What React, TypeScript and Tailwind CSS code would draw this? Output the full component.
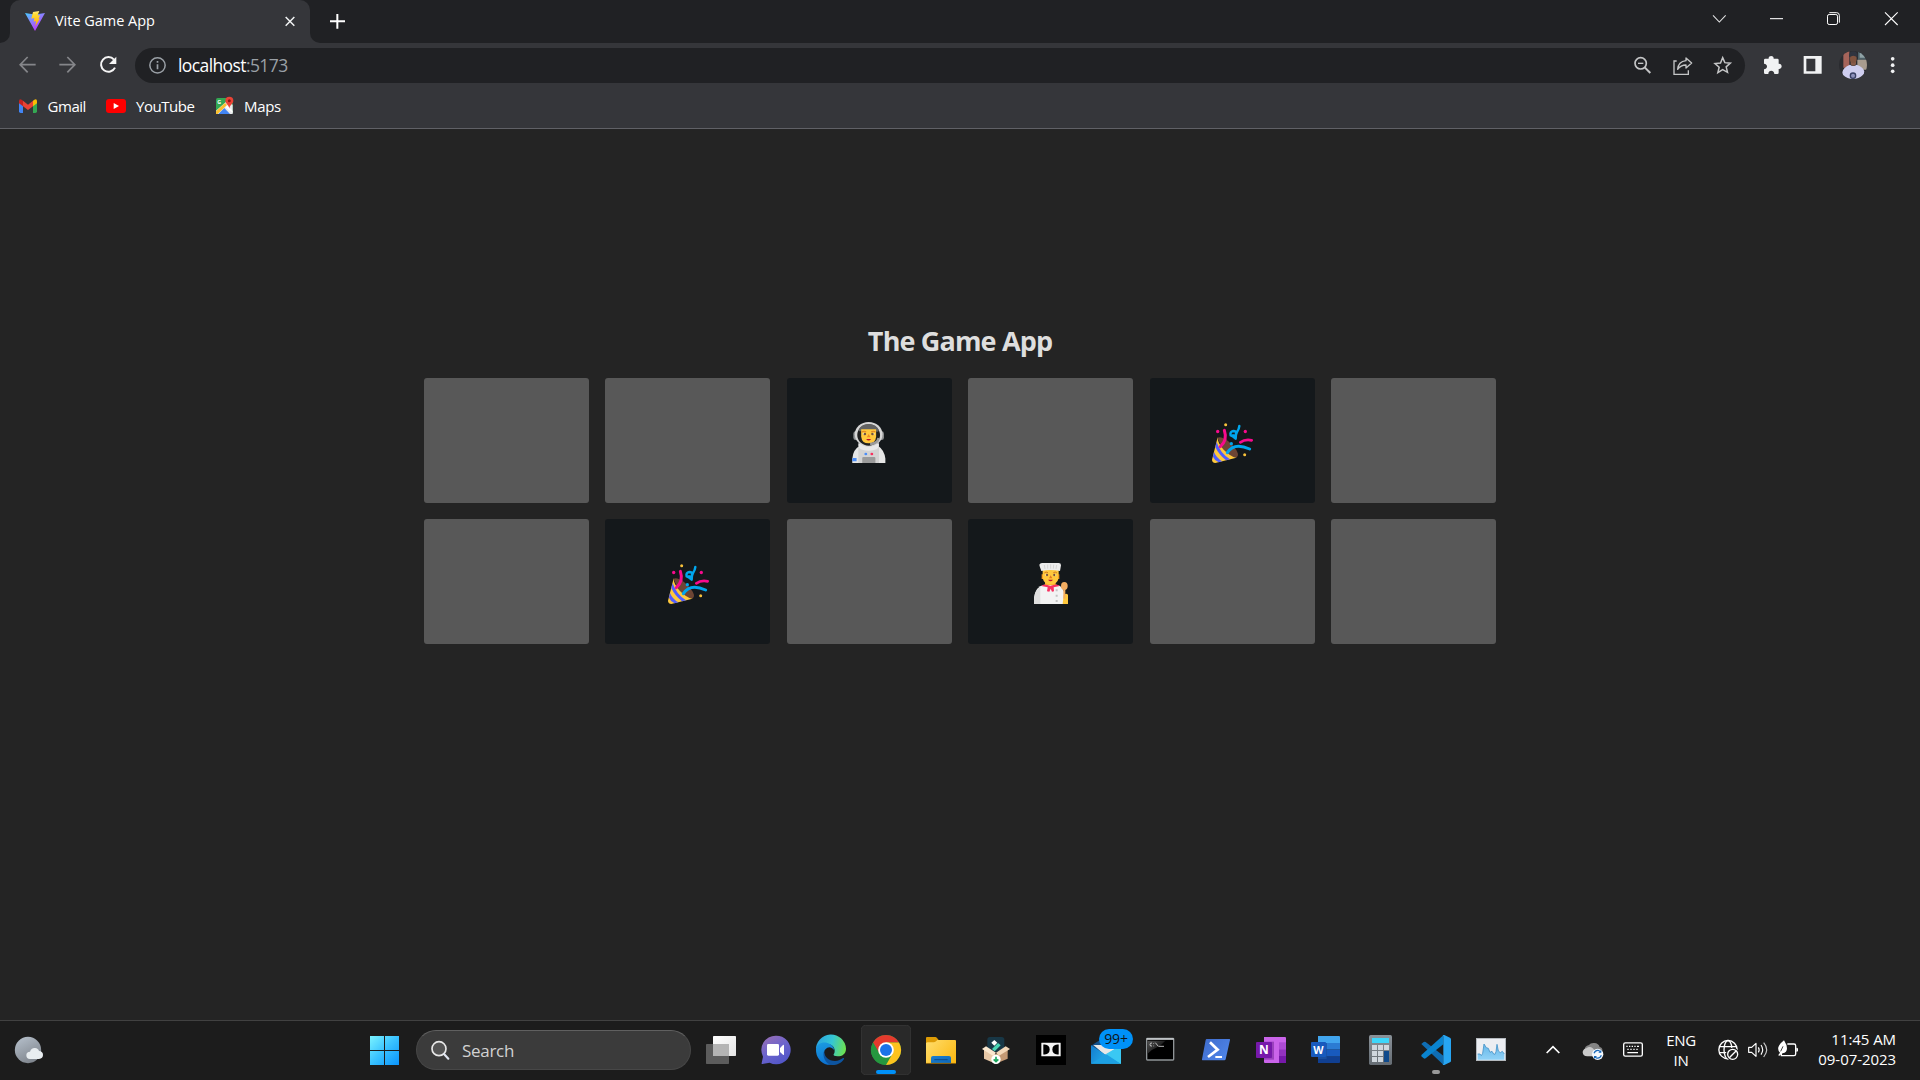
import React from "react";

type IconProps = { box: string; w: number; h: number; className?: string; children: React.ReactNode };

function Icon({ box, w, h, className = "", children }: IconProps) {
  return (
    <svg viewBox={box} width={w} height={h} fill="none" preserveAspectRatio="none" className={`block shrink-0 ${className}`}>
      {children}
    </svg>
  );
}

function App50({ box, children }: { box: string; children: React.ReactNode }) {
  return (
    <Icon box={box} w={50} h={50}>
      {children}
    </Icon>
  );
}

function TabStrip() {
  return (
    <div className="flex h-[43px] bg-[#35363a]">
      <div className="w-[10px] rounded-br-[10px] bg-[#202124]" />
      <div className="w-[300px] bg-[#202124]">
        <div className="flex h-full items-center rounded-t-[10px] bg-[#35363a] pl-[14px]">
          <Icon box="72 27 66 69" w={22} h={23} className="-mt-[2px]">
            <defs>
              <linearGradient id="vite" x1="76" y1="36" x2="110" y2="92" gradientUnits="userSpaceOnUse">
                <stop stopColor="#41D1FF" />
                <stop offset="0.55" stopColor="#8f7bff" />
                <stop offset="1" stopColor="#BD34FE" />
              </linearGradient>
              <linearGradient id="bolt" x1="105" y1="34" x2="108" y2="78" gradientUnits="userSpaceOnUse">
                <stop stopColor="#FFEA83" />
                <stop offset="0.2" stopColor="#FFDD35" />
                <stop offset="1" stopColor="#FFA800" />
              </linearGradient>
            </defs>
            <path d="M75 39l24 4h12l24-4-30 54z" fill="url(#vite)" />
            <path d="M99 36l19-3-5 13 7 0-4 10 3 1-13 22 2-16-7 2 2-11-9 2z" fill="url(#bolt)" />
          </Icon>
          <span className="-mt-[2px] ml-[9px] w-[229px] text-[14.5px] leading-5 tracking-[-0.02px] whitespace-nowrap text-white">Vite Game App</span>
          <Icon box="852 45 36 36" w={12} h={12} className="-mt-[1px]">
            <path d="M857 51l26 26M883 51l-26 26" stroke="#f1f3f4" strokeWidth="4.5" />
          </Icon>
        </div>
      </div>
      <div className="flex flex-1 items-center rounded-bl-[10px] bg-[#202124]">
        <Icon box="987 39 51 51" w={17} h={17} className="ml-[19px]">
          <path d="M1012 42v44M990 64h45" stroke="#fff" strokeWidth="6" />
        </Icon>
        <div className="flex-1" />
        <Icon box="330 30 60 48" w={20} h={16} className="mr-[40px] -mt-[7px]">
          <path d="M339 46l19 20 19-20" stroke="#e2e3e4" strokeWidth="3.2" />
        </Icon>
        <Icon box="510 30 42 48" w={14} h={16} className="mr-[41px] -mt-[7px]">
          <path d="M510 56h39" stroke="#fff" strokeWidth="3.2" />
        </Icon>
        <Icon box="675 30 51 48" w={17} h={16} className="mr-[42px] -mt-[7px]">
          <rect x="682.5" y="43.500" width="30" height="30" rx="5" stroke="#fff" strokeWidth="3" />
          <path d="M688 38h22q8 0 8 8v22" stroke="#fff" strokeWidth="3" />
        </Icon>
        <Icon box="852 30 45 48" w={15} h={16} className="mr-[21px] -mt-[7px]">
          <path d="M855 37l38 38M893 37l-38 38" stroke="#fff" strokeWidth="3.2" />
        </Icon>
      </div>
    </div>
  );
}

function Toolbar() {
  return (
    <div className="flex h-[45px] items-center">
      <Icon box="54 165 66 60" w={22} h={20} className="-mt-[1px] ml-[18px]">
        <path d="M107 194H61M83 171l-22.500 23L83 217" stroke="#85868a" strokeWidth="5" />
      </Icon>
      <Icon box="174 165 66 60" w={22} h={20} className="-mt-[1px] ml-[18px]">
        <path d="M178 194h46M202 171l22.500 23L202 217" stroke="#85868a" strokeWidth="5" />
      </Icon>
      <Icon box="294 165 66 60" w={22} h={20} className="-mt-[1px] ml-[18px]">
        <path d="M342 179A22 22 0 1 0 345 203" stroke="#f5f5f5" strokeWidth="6" />
        <path d="M349 170v22h-22z" fill="#f5f5f5" />
      </Icon>
      <div className="ml-[15px] flex h-[35px] w-[1610px] items-center rounded-full bg-[#202124]">
        <Icon box="444 168 57 57" w={19} h={19} className="ml-[13px]">
          <circle cx="472.500" cy="196" r="23" stroke="#9aa0a6" strokeWidth="4.500" />
          <path d="M472.500 193v15M472.500 183v5" stroke="#9aa0a6" strokeWidth="5" />
        </Icon>
        <span className="-mt-[1px] ml-[11px] w-[1451px] text-[17.5px] leading-6 tracking-[-0.6px] whitespace-nowrap text-white">
          localhost<span className="text-[#9aa0a6]">:5173</span>
        </span>
        <Icon box="96 165 66 60" w={22} h={20} className="-mt-[1px] ml-[3px]">
          <circle cx="122" cy="190" r="17" stroke="#c4c5c6" strokeWidth="5" />
          <path d="M114 190h16" stroke="#c4c5c6" strokeWidth="4" />
          <path d="M134 202l17 17" stroke="#c4c5c6" strokeWidth="6" />
        </Icon>
        <Icon box="216 165 66 66" w={22} h={22} className="mt-[1px] ml-[18px]">
          <path d="M230 183h-8v40h43v-12" stroke="#c4c5c6" strokeWidth="4" />
          <path d="M258 174l17 15-17 15v-9c-11 0-18 3-25 13 1-14 9-24 25-26z" stroke="#c4c5c6" strokeWidth="4" strokeLinejoin="round" />
        </Icon>
        <Icon box="336 165 66 60" w={22} h={20} className="-mt-[1px] ml-[18px]">
          <path d="M368 173l6.500 15 16.500 1.500-12.500 11 4 16.500L368 209l-14.500 9 4-16.500-12.500-11 16.500-1.500z" stroke="#c4c5c6" strokeWidth="4.500" />
        </Icon>
      </div>
      <Icon box="486 165 66 60" w={22} h={20} className="-mt-[1px] ml-[17px]">
        <path d="M492 180q0-4 4-4h10c-2-10 16-11 15 0h11q4 0 4 4v11c12-1 12 17 0 16v11q0 4-4 4h-9c-1-13-18-13-18 0h-9q-4 0-4-4v-10c12-2 12-16 0-17z" fill="#f1f2f3" />
      </Icon>
      <Icon box="606 165 66 60" w={22} h={20} className="-mt-[1px] ml-[18px]">
        <path fillRule="evenodd" d="M611 168h54v53h-54zM619 176v38h27v-38z" fill="#f1f2f3" />
      </Icon>
      <Icon box="717 152 84 84" w={28} h={28} className="-mt-[1px] ml-[15px] rounded-full">
        <path d="M717 152h84v84h-84z" fill="#2b2c30" />
        <path d="M730 152h18v50h-18z" fill="#a5645a" />
        <path d="M774 152h27v26h-27z" fill="#4e6168" />
        <path d="M779 158h16v14h-16z" fill="#8fa2a6" />
        <path d="M772 178h29v30h-29z" fill="#a99c8f" />
        <path d="M727 216q2-15 23-23 10 8 20 0 19 6 23 20l-4 23h-58z" fill="#cfceef" />
        <path d="M752 180h16v12q-8 9-16 0z" fill="#875b49" />
        <ellipse cx="760" cy="175" rx="10" ry="13" fill="#80533f" />
        <path d="M747 170q-1-17 13-17 13 0 13 17l-13-4z" fill="#30343f" />
        <circle cx="759" cy="226" r="8" fill="#8d91bb" stroke="#394065" strokeWidth="4" />
      </Icon>
      <Icon box="864 165 30 60" w={10} h={20} className="-mt-[1px] ml-[21px]">
        <circle cx="878" cy="176.500" r="5.500" fill="#f1f2f3" />
        <circle cx="878" cy="195.500" r="5.500" fill="#f1f2f3" />
        <circle cx="878" cy="214" r="5.500" fill="#f1f2f3" />
      </Icon>
    </div>
  );
}

function Bookmarks() {
  return (
    <div className="flex h-[41px] items-center border-b border-[#606166] pb-[3px] text-[15px] leading-5 tracking-[-0.45px] whitespace-nowrap text-white">
      <Icon box="54 291 60 54" w={20} h={18} className="ml-[18px] -mt-[1px]">
        <path d="M57 303v31q0 5 5 5h7v-27z" fill="#4285f4" />
        <path d="M111 303v31q0 5-5 5h-7v-27z" fill="#34a853" />
        <path d="M99 302l4-3q8-4 8 5v6l-12 9z" fill="#fbbc04" />
        <path d="M57 310v-6q0-9 8-5l4 3v17z" fill="#c5221f" />
        <path d="M69 302l15 12 15-12v17l-15 11-15-11z" fill="#ea4335" />
      </Icon>
      <span className="-mt-[2px] ml-[9.500px] w-[57.500px]">Gmail</span>
      <Icon box="315 291 66 54" w={22} h={18} className="-mt-[1px]">
        <rect x="318" y="297" width="60" height="42" rx="9" fill="#f00" />
        <path d="M341 309v18l16-9z" fill="#fff" />
      </Icon>
      <span className="-mt-[2px] ml-[9px] w-[78px]">YouTube</span>
      <Icon box="642 285 66 60" w={22} h={20} className="-mt-[3px]">
        <rect x="648" y="294" width="50" height="48" rx="5" fill="#34a853" />
        <path d="M648 332l32-28 18 10v28h-50z" fill="#e9eaed" />
        <path d="M655 342l18-18 17 18z" fill="#4285f4" />
        <path d="M648 334l27-25 6 6-28 27h-5z" fill="#fbc02d" />
        <path d="M676 322l6-6 16 17v6z" fill="#fff" />
        <text x="652" y="313" fontSize="16" fontWeight="700" fill="#fff" fontFamily="Open Sans">G</text>
        <path d="M688 326c-1-13-12-14-12-24a12 12 0 0 1 24 0c0 10-11 11-12 24z" fill="#ea4335" />
        <circle cx="688" cy="302" r="4.500" fill="#8c1a14" />
      </Icon>
      <span className="-mt-[2px] ml-[8px] tracking-[-0.35px]">Maps</span>
    </div>
  );
}

function Astronaut() {
  return (
    <Icon box="1200 306 118 126" w={42} h={42}>
      <path d="M1212 429v-13q2-27 20-38h53q17 12 20 38v13z" fill="#e6e6e6" />
      <path d="M1229 380h58v49h-58z" fill="#d3d3d3" />
      <path d="M1229 376q0 16 29 16t29-16v-6h-58z" fill="#e9e9e9" />
      <rect x="1215" y="334" width="86" height="26" rx="7" fill="#8f9193" />
      <ellipse cx="1258" cy="343" rx="39" ry="37" fill="#d6d6d6" />
      <ellipse cx="1258" cy="345" rx="32" ry="32" fill="#212121" />
      <path d="M1229 332q6-20 29-20t29 20q-6 7-9 0h-40q-4 4-9 0z" fill="#636363" />
      <path d="M1237 328h42v22q-2 20-21 20t-21-20z" fill="#ffc83d" />
      <path d="M1239 336q6-5 12 0M1265 336q6-5 12 0" stroke="#e38724" strokeWidth="3" />
      <ellipse cx="1247" cy="342" rx="4" ry="4" fill="#70543f" />
      <ellipse cx="1269" cy="342" rx="4" ry="4" fill="#70543f" />
      <path d="M1243 339v5M1273 339v5" stroke="#fff" strokeWidth="2" />
      <path d="M1258 342l-5 10h10z" fill="#f08a24" />
      <path d="M1251 357h14q-7 9-14 0z" fill="#b80b2e" />
      <path d="M1286 354q-2 17-24 18" stroke="#9a9a9a" strokeWidth="7" />
      <circle cx="1250" cy="402" r="4" fill="#4a8df8" />
      <circle cx="1267" cy="402" r="4" fill="#f8315f" />
      <path d="M1240 414q0-3 3-3h31q3 0 3 3v15h-37z" fill="#9b9b9b" />
      <path d="M1213 414h11v10h-12z" fill="#4a8df8" />
    </Icon>
  );
}

function Party() {
  return (
    <Icon box="213 156 126 126" w={42} h={42}>
      <path d="M232 203q12-5 32 10 24 19 30 39 1 8-5 11l-32-8z" fill="#6d4534" />
      <path d="M233 202l-17 67q0 9 10 10l63-16q-16-2-38-24-19-21-18-37z" fill="#ffc83d" />
      <path d="M230 216l-4 15q10 22 32 40l12-3q-30-19-40-52zM222 246l-3 14q5 12 17 17l11-3q-17-9-25-28z" fill="#4f5dff" />
      <path d="M253 181q10 30-12 49" stroke="#f70a8d" strokeWidth="9" strokeLinecap="round" />
      <path d="M262 248q20-32 67-11" stroke="#00a6ed" strokeWidth="9" strokeLinecap="round" />
      <path d="M301 217q14-10 34-6" stroke="#f70a8d" strokeWidth="8" strokeLinecap="round" />
      <path d="M298 168q-1 10-7 18-5 9-4 20-9-8-15-10-3-11 8-13 10 0 8 10-3 7-9 3" stroke="#00a6ed" strokeWidth="7.500" strokeLinecap="round" strokeLinejoin="round" />
      <circle cx="233" cy="184.500" r="5" fill="#f70a8d" />
      <circle cx="316" cy="184.500" r="5" fill="#f70a8d" />
      <circle cx="257" cy="164" r="4.500" fill="#f9c23c" />
      <circle cx="314" cy="254" r="4.500" fill="#f9c23c" />
      <circle cx="274" cy="221" r="5" fill="#00a6ed" />
    </Icon>
  );
}

function Chef() {
  return (
    <Icon box="1290 159 126 126" w={42} h={42}>
      <path d="M1302 282v-18q4-35 30-40h38q22 4 24 32v26z" fill="#f3f3f3" />
      <path d="M1302 282v-18q3-25 19-33v51z" fill="#dedede" />
      <path d="M1335 208h32v18h-32z" fill="#f9b52c" />
      <path d="M1328 176h48v28q-4 19-24 19t-24-19z" fill="#ffc83d" />
      <path d="M1325 193h4v14h-4zM1374 193h4v14h-4z" fill="#f59f23" />
      <path d="M1318 164q2-5 8-5h50q7 0 7 7l-3 17q-28-6-56 0l-5-14z" fill="#ececec" />
      <path d="M1333 165l2 12M1343 164v12M1352 163v13M1361 164l-1 12M1370 165l-2 12" stroke="#cfcfcf" strokeWidth="2.500" />
      <path d="M1333 189q5-5 11-1M1360 188q6-4 11 1" stroke="#d67d20" strokeWidth="3" />
      <circle cx="1341" cy="195" r="3.500" fill="#76503e" />
      <circle cx="1363" cy="195" r="3.500" fill="#76503e" />
      <path d="M1337 193v4M1367 193v4" stroke="#fff" strokeWidth="2" />
      <path d="M1352 196l-5 9h10z" fill="#e87920" />
      <path d="M1344 209h15q-7 9-15 0z" fill="#bd1733" />
      <path d="M1324 228q8-9 27 0 20-9 28 0l-18 4 1 12-6 1-4-9-4 9-7-1 2-12z" fill="#f8315f" />
      <path d="M1388 282l3-26q6-8 13-2v28z" fill="#ffc83d" />
      <path d="M1390 236h6v30h-6z" fill="#f3ad61" />
      <ellipse cx="1393" cy="228" rx="10" ry="12" fill="#f3ad61" />
      <path d="M1370 238v6M1370 254v6M1370 270v6" stroke="#c3c3c3" strokeWidth="6" />
    </Icon>
  );
}

const cards: (null | (() => React.ReactElement))[] = [null, null, Astronaut, null, Party, null, null, Party, null, Chef, null, null];

function Game() {
  return (
    <main className="flex flex-1 flex-col items-center bg-[#242424] pt-[194px]">
      <h1 className="h-[55px] text-[27px] leading-[36px] font-bold tracking-[-0.85px] whitespace-nowrap text-[#dedede]">The Game App</h1>
      <div className="grid w-[1072px] grid-cols-6 gap-x-[16.5px] gap-y-4">
        {cards.map((Face, i) =>
          Face ? (
            <div key={i} className="flex h-[125px] justify-center rounded-[3px] bg-[#14181b] pt-[44px]">
              <Face />
            </div>
          ) : (
            <div key={i} className="h-[125px] rounded-[3px] bg-[#585858]" />
          ),
        )}
      </div>
    </main>
  );
}

function Pinned() {
  return (
    <div className="ml-[5px] flex gap-[5px]">
      <App50 box="888 30 150 150">
        <defs>
          <linearGradient id="tv" x1="0" y1="0" x2="1" y2="1">
            <stop stopColor="#fff" />
            <stop offset="1" stopColor="#e4e4e4" />
          </linearGradient>
        </defs>
        <rect x="939" y="63" width="69" height="60" rx="2" fill="url(#tv)" />
        <rect x="918" y="87" width="69" height="60" rx="2" fill="#5c5c5c" />
        <path d="M939 87h48v36h-48z" fill="#b4b4b4" />
      </App50>
      <App50 box="33 30 150 150">
        <defs>
          <linearGradient id="chat" x1="70" y1="65" x2="120" y2="148" gradientUnits="userSpaceOnUse">
            <stop stopColor="#9a6fb4" />
            <stop offset="0.5" stopColor="#6d64cc" />
            <stop offset="1" stopColor="#5256c8" />
          </linearGradient>
        </defs>
        <path d="M107 62a43 43 0 1 1-18 81l-22 4q-3 0-2-3l4-19a43 43 0 0 1 38-63z" fill="url(#chat)" />
        <rect x="81" y="87" width="36" height="35" rx="4" fill="#fff" />
        <path d="M120 99l9-9q3-2 3 2v26q0 4-3 1l-9-8z" fill="#fff" />
      </App50>
      <App50 box="198 30 150 150">
        <defs>
          <linearGradient id="edgeTop" x1="230" y1="80" x2="318" y2="100" gradientUnits="userSpaceOnUse">
            <stop stopColor="#2ba5e0" />
            <stop offset="0.5" stopColor="#35c6d4" />
            <stop offset="1" stopColor="#6fe24b" />
          </linearGradient>
          <linearGradient id="edgeMid" x1="240" y1="80" x2="260" y2="150" gradientUnits="userSpaceOnUse">
            <stop stopColor="#1b9de2" />
            <stop offset="1" stopColor="#0c6fd0" />
          </linearGradient>
        </defs>
        <path d="M228 106a45 45 0 0 1 90-5c0 16-12 23-25 23-9 0-14-3-12-6 6-9 3-24-9-29-20-8-43 4-44 17z" fill="url(#edgeTop)" />
        <path d="M228 104c0-18 20-24 34-20 13 4 21 13 20 21-12-18-31-4-30 10 1 20 22 31 40 27-10 7-20 8-30 7a45 45 0 0 1-34-45z" fill="url(#edgeMid)" />
        <path d="M253 106c-2 20 13 32 32 32 10 0 18-5 24-9 3-1 4 1 3 3-8 13-23 19-37 18-18-2-30-27-22-44z" fill="#0d549f" />
      </App50>
      <App50 box="363 30 150 150">
        <rect x="364" y="31" width="148" height="148" rx="13" fill="#292929" stroke="#353535" strokeWidth="3" />
        <circle cx="438" cy="105" r="45" fill="#25973f" />
        <path d="M399 82.500A45 45 0 0 1 477 82.500H438L418.500 94z" fill="#e53a2d" />
        <path d="M399 82.500L418.500 116.250L438 105V82.500z" fill="#e53a2d" />
        <path d="M399 82.500L418.500 116.250L438 127.500V150A45 45 0 0 1 399 82.500z" fill="#25973f" />
        <path d="M438 150A45 45 0 0 0 477 82.500H438V105L457.500 116.250z" fill="#fcc31e" />
        <circle cx="438" cy="105" r="23.500" fill="#fff" />
        <circle cx="438" cy="105" r="18" fill="#1a73e8" />
        <rect x="408" y="165" width="60" height="12" rx="6" fill="#0091f8" />
      </App50>
      <App50 box="528 30 150 150">
        <defs>
          <linearGradient id="folder" x1="560" y1="80" x2="640" y2="145" gradientUnits="userSpaceOnUse">
            <stop stopColor="#ffdc69" />
            <stop offset="1" stopColor="#fbb914" />
          </linearGradient>
          <linearGradient id="drawer" x1="0" y1="0" x2="1" y2="1">
            <stop stopColor="#1a7fd0" />
            <stop offset="1" stopColor="#0d66b8" />
          </linearGradient>
        </defs>
        <path d="M558 69q0-3 3-3h25q3 0 5 3l5 6v20h-38z" fill="#dd9b05" />
        <path d="M558 84q2-2 5-2h18q4 0 7-3l4-4h53q3 0 3 3v66h-90z" fill="url(#folder)" />
        <path d="M573 144v-15q0-6 6-6h48q6 0 6 6v15z" fill="url(#drawer)" />
        <path d="M583 134h40" stroke="#0a4a8c" strokeWidth="3" />
        <path d="M558 145h90" stroke="#d89204" strokeWidth="2" />
      </App50>
      <App50 box="693 30 150 150">
        <rect x="742" y="66" width="51" height="44" rx="8" fill="#183746" />
        <path d="M763 75l9 8-9 9-9-9z" fill="#fff" />
        <path d="M756 102l18-18 8 7-18 18z" fill="#49d6b5" />
        <path d="M732 103l35 14v29l-35-15z" fill="#e8c9a7" />
        <path d="M803 103l-36 14v29l36-15z" fill="#c49a75" />
        <path d="M738 94l30 19-9 9-33-20z" fill="#fae7ce" />
        <path d="M797 94l-29 19 9 9 33-20z" fill="#f3d8b9" />
        <circle cx="768" cy="133" r="14" fill="#fff" />
        <path d="M768 125v14M761 133l7 7 7-7" stroke="#1ba75d" strokeWidth="5" />
      </App50>
      <App50 box="-12 30 150 150">
        <path d="M18 60h90v90H18z" fill="#000" />
        <rect x="34" y="83" width="58" height="41" rx="1" fill="#f3f3f3" />
        <path d="M40 88.500h4q15 2 15 15t-15 15h-4z" fill="#000" />
        <path d="M86 88.500h-4q-15 2-15 15t15 15h4z" fill="#000" />
      </App50>
      <div className="relative">
        <App50 box="153 30 150 150">
          <defs>
            <linearGradient id="mail" x1="183" y1="100" x2="273" y2="146" gradientUnits="userSpaceOnUse">
              <stop stopColor="#1480d0" />
              <stop offset="0.5" stopColor="#22a5e6" />
              <stop offset="1" stopColor="#3ccff5" />
            </linearGradient>
          </defs>
          <path d="M183 92l28-18h34l28 18v30h-90z" fill="#145089" />
          <path d="M190 90h76v24l-38 8z" fill="#e7e7e7" />
          <path d="M183 91v55h90V91l-45 29z" fill="url(#mail)" />
          <path d="M183 146l45-29 45 29z" fill="#1da0e3" />
          <path d="M273 91v55l-45-29z" fill="#3ac8f3" />
        </App50>
        <span className="absolute top-[4px] left-[18px] flex h-5 w-[34px] items-center justify-center rounded-full bg-[#0091f8] text-[14px] leading-5 tracking-[-0.1px] text-[#101418]">99+</span>
      </div>
      <App50 box="318 30 150 150">
        <defs>
          <linearGradient id="term" x1="352" y1="76" x2="380" y2="105" gradientUnits="userSpaceOnUse">
            <stop stopColor="#555" />
            <stop offset="0.900" stopColor="#222" />
            <stop offset="1" stopColor="#000" />
          </linearGradient>
        </defs>
        <rect x="350" y="70" width="81" height="65" rx="2" fill="#000" stroke="#8f9497" strokeWidth="4" />
        <path d="M352 77h77v8q-48 3-77 32z" fill="url(#term)" />
        <path d="M350 72h81" stroke="#c9cdd0" strokeWidth="5" />
        <path d="M366 84q-6-1-6 5t6 4M371 85v2M371 92v2M376 83l9 11M386 94h16" stroke="#d8d8d8" strokeWidth="2.500" />
      </App50>
      <App50 box="483 30 150 150">
        <defs>
          <linearGradient id="ps" x1="520" y1="72" x2="590" y2="136" gradientUnits="userSpaceOnUse">
            <stop stopColor="#3f6ccc" />
            <stop offset="1" stopColor="#4f86ea" />
          </linearGradient>
        </defs>
        <path d="M530 72h68q3 0 2 3l-13 58q-1 3-4 3h-65q-3 0-2-3l11-58q1-3 3-3z" fill="url(#ps)" />
        <path d="M540 82l23 22-29 22" stroke="#fff" strokeWidth="8" />
        <path d="M556 126h20" stroke="#fff" strokeWidth="6" />
      </App50>
      <App50 box="648 30 150 150">
        <path d="M702 66h63q3 0 3 3v75h-63q-3 0-3-3z" fill="#ca64ea" />
        <path d="M747 82h21v21h-21z" fill="#ae4bd5" />
        <path d="M747 103h21v20h-21z" fill="#9332bf" />
        <path d="M747 123h21v21h-21z" fill="#7719aa" />
        <rect x="702" y="80" width="30" height="54" fill="#9a42bd" />
        <rect x="678" y="81" width="48" height="48" rx="3" fill="#7719aa" />
        <text x="702" y="118" textAnchor="middle" fontSize="36" fontWeight="700" fill="#fff" fontFamily="Open Sans">N</text>
      </App50>
      <App50 box="63 30 150 150">
        <path d="M114 63h63q3 0 3 3v18h-66z" fill="#41a5ee" />
        <path d="M114 84h66v20h-66z" fill="#2b7cd3" />
        <path d="M114 104h66v21h-66z" fill="#185abd" />
        <path d="M114 125h66v16q0 3-3 3h-63z" fill="#103f91" />
        <path d="M114 84h26v48h-26z" fill="#1a4fa0" />
        <rect x="93" y="81" width="45" height="45" rx="3" fill="#185abd" />
        <text x="115.500" y="116" textAnchor="middle" fontSize="32" fontWeight="700" fill="#fff" fontFamily="Open Sans">W</text>
      </App50>
      <App50 box="228 30 150 150">
        <defs>
          <linearGradient id="calc" x1="0" y1="0" x2="0" y2="1">
            <stop stopColor="#8a9299" />
            <stop offset="1" stopColor="#656c73" />
          </linearGradient>
        </defs>
        <rect x="267" y="60" width="69" height="90" rx="5" fill="url(#calc)" />
        <path d="M276 69h51v15h-51z" fill="#3dd6fa" />
        <path d="M276 90h15v15h-15zM294 90h15v15h-15zM312 90h15v15h-15zM276 108h15v15h-15zM294 108h15v15h-15zM276 126h15v15h-15zM294 126h15v15h-15z" fill="#d0d7de" />
        <path d="M312 108h15v33h-15z" fill="#0f4a8c" />
      </App50>
      <App50 box="393 30 150 150">
        <path d="M424 87l7-6q3-2 6 0l53 41v27z" fill="#0f6db3" />
        <path d="M424 124l7 6q3 2 6 0l53-42V61l-65 58q-2 3-1 5z" fill="#0a84cf" />
        <path d="M488 61q2-2 5-1l17 8q3 2 3 5v64q0 3-3 5l-17 8q-3 1-5-1l2-3V64z" fill="#27a5f2" />
        <rect x="456" y="165" width="24" height="12" rx="6" fill="#989898" />
      </App50>
      <App50 box="558 30 150 150">
        <defs>
          <linearGradient id="perf" x1="0" y1="0" x2="0" y2="1">
            <stop stopColor="#65b6e8" />
            <stop offset="1" stopColor="#90d2f7" />
          </linearGradient>
        </defs>
        <rect x="589.500" y="70.500" width="87" height="66" fill="#eceef2" stroke="#b4b9be" strokeWidth="3" />
        <path d="M593 134v-17h7l4 5 4-7 4-28 7 11 6 2 5 12 6-3 5 8 4 1 3-8 3-22 4 20 6 5 6-4 6 8v17z" fill="url(#perf)" />
        <path d="M593 117h7l4 5 4-7 4-28 7 11 6 2 5 12 6-3 5 8 4 1 3-8 3-22 4 20 6 5 6-4 6 8" stroke="#4693c8" strokeWidth="2.500" />
      </App50>
    </div>
  );
}

function Tray() {
  return (
    <>
      <Icon box="30 60 80 90" w={26.667} h={30} className="ml-[24px]">
        <path d="M50 114l19-19 19 19" stroke="#fff" strokeWidth="5" />
      </Icon>
      <Icon box="150 60 90 90" w={30} h={30} className="ml-[13.333px]">
        <path d="M165 104q-2-11 12-14 4-7 16-6 13 1 16 12 10 2 8 13l-30 14z" fill="#848484" />
        <path d="M173 124c-18 1-20-21-4-24 10-8 20-2 24 6l8 18z" fill="#c9c9c9" />
        <circle cx="203" cy="118" r="17" fill="#f4f9fe" />
        <path d="M192 115q5-11 15-8l5 4M214 121q-5 11-15 8l-5-4" stroke="#1767b8" strokeWidth="3.500" />
        <path d="M214 104v9h-9zM192 132v-9h9z" fill="#1767b8" />
      </Icon>
      <Icon box="270 60 81 90" w={27} h={30} className="ml-[10px]">
        <rect x="281" y="83.500" width="56" height="40" rx="5" stroke="#fff" strokeWidth="4" />
        <path d="M289 94h4M297 94h4M305 94h4M313 94h4M321 94h6M292 103h4M301 103h4M310 103h4M319 103h4M292 113h32" stroke="#fff" strokeWidth="4" />
      </Icon>
      <div className="ml-[14px] flex w-[40px] flex-col items-center text-[15px] leading-5 tracking-[-0.3px] text-white">
        <span>ENG</span>
        <span>IN</span>
      </div>
      <Icon box="555 60 81 90" w={27} h={30} className="ml-[14px]">
        <circle cx="594" cy="104" r="27.500" stroke="#fff" strokeWidth="4" />
        <ellipse cx="594" cy="104" rx="12" ry="27.500" stroke="#fff" strokeWidth="4" />
        <path d="M568 95h52M568 113h30" stroke="#fff" strokeWidth="4" />
        <circle cx="608" cy="118" r="20" fill="#1c1c1c" />
        <circle cx="608" cy="118" r="15" stroke="#fff" strokeWidth="4" />
        <path d="M598 128l20-20" stroke="#fff" strokeWidth="4" />
      </Icon>
      <Icon box="645 60 78 90" w={26} h={30} className="ml-[3px]">
        <path d="M656 97h9l13-12v39l-13-12h-9z" stroke="#fff" strokeWidth="3.500" strokeLinejoin="round" />
        <path d="M685 97q5 8 0 15M693 90q10 14 0 29" stroke="#fff" strokeWidth="3.500" />
        <path d="M701 83q18 21 0 43" stroke="#c8c8c8" strokeWidth="3.500" />
      </Icon>
      <Icon box="735 60 78 90" w={26} h={30} className="ml-[4px]">
        <path d="M772 87h20q5 0 5 5v25q0 5-5 5h-38v-7" stroke="#fff" strokeWidth="4" />
        <path d="M799 98q5 0 5 3v6q0 3-5 3z" fill="#fff" />
        <path d="M762 76q9 14 9 24 0 14-13 15l-11 8-2-3 5-7q-12-12 2-28z" fill="#fff" />
        <path d="M759 94l-7 15" stroke="#1c1c1c" strokeWidth="2.500" />
      </Icon>
      <div className="-mt-[2px] ml-auto flex flex-col items-end pr-[24px] text-[15px] leading-5 tracking-[-0.06px] whitespace-nowrap text-white">
        <span>11:45 AM</span>
        <span>09-07-2023</span>
      </div>
    </>
  );
}

function Taskbar() {
  return (
    <div className="flex h-[60px] items-center border-t border-[#414141] bg-[#1c1c1c] pb-px">
      <Icon box="30 30 150 150" w={50} h={50} className="ml-[10px]">
        <defs>
          <linearGradient id="moon" x1="60" y1="66" x2="100" y2="144" gradientUnits="userSpaceOnUse">
            <stop stopColor="#b3bdc8" />
            <stop offset="1" stopColor="#7d838b" />
          </linearGradient>
        </defs>
        <circle cx="84" cy="105" r="39.500" fill="url(#moon)" />
        <path d="M90 132a11 11 0 0 1 0-22q4-12 15-11 10 1 12 9 12 1 12 12t-12 12z" fill="#e8edf0" />
      </Icon>
      <Icon box="1080 30 150 150" w={50} h={50} className="ml-[300px]">
        <defs>
          <linearGradient id="win" x1="1110" y1="63" x2="1197" y2="150" gradientUnits="userSpaceOnUse">
            <stop stopColor="#7bf3ff" />
            <stop offset="0.500" stopColor="#38c1ff" />
            <stop offset="1" stopColor="#0a93fb" />
          </linearGradient>
        </defs>
        <path d="M1110 63h42v42h-42zM1155 63h42v42h-42zM1110 108h42v42h-42zM1155 108h42v42h-42z" fill="url(#win)" />
      </Icon>
      <div className="ml-[6px] flex h-[40px] w-[275px] items-center rounded-full border border-[#474747] border-t-[#606060] bg-[#3b3b3b]">
        <Icon box="87 72 66 66" w={22} h={22} className="ml-[12px]">
          <circle cx="117" cy="101" r="21" fill="#545454" stroke="#e8e8e8" strokeWidth="5" />
          <path d="M132 117l13 14" stroke="#e0e5f0" strokeWidth="6.500" strokeLinecap="round" />
        </Icon>
        <span className="mt-[1px] ml-[11px] text-[17px] leading-6 tracking-[-0.3px] text-[#d2d2d2]">Search</span>
      </div>
      <Pinned />
      <Tray />
    </div>
  );
}

export default function App() {
  return (
    <div className="flex h-[1080px] w-[1920px] flex-col overflow-hidden bg-[#35363a] font-['Open_Sans','Noto_Sans',sans-serif]">
      <TabStrip />
      <Toolbar />
      <Bookmarks />
      <Game />
      <Taskbar />
    </div>
  );
}
